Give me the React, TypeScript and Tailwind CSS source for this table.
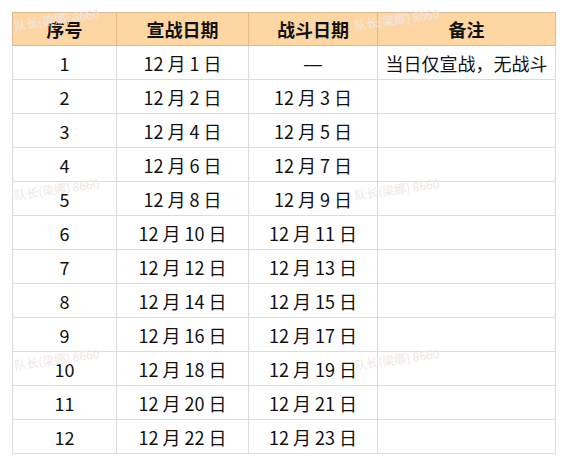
import React from 'react';

const rows = [
  { no: 1, declare: '12 月 1 日', battle: '—', note: '当日仅宣战，无战斗' },
  { no: 2, declare: '12 月 2 日', battle: '12 月 3 日', note: '' },
  { no: 3, declare: '12 月 4 日', battle: '12 月 5 日', note: '' },
  { no: 4, declare: '12 月 6 日', battle: '12 月 7 日', note: '' },
  { no: 5, declare: '12 月 8 日', battle: '12 月 9 日', note: '' },
  { no: 6, declare: '12 月 10 日', battle: '12 月 11 日', note: '' },
  { no: 7, declare: '12 月 12 日', battle: '12 月 13 日', note: '' },
  { no: 8, declare: '12 月 14 日', battle: '12 月 15 日', note: '' },
  { no: 9, declare: '12 月 16 日', battle: '12 月 17 日', note: '' },
  { no: 10, declare: '12 月 18 日', battle: '12 月 19 日', note: '' },
  { no: 11, declare: '12 月 20 日', battle: '12 月 21 日', note: '' },
  { no: 12, declare: '12 月 22 日', battle: '12 月 23 日', note: '' },
];

// faint watermark spots
const marks = [
  'left-[14px] top-[13px]',
  'left-[354px] top-[13px]',
  'left-[14px] top-[183px]',
  'left-[354px] top-[183px]',
  'left-[14px] top-[353px]',
  'left-[354px] top-[353px]',
];

export default function App() {
  return (
    <div className="relative w-[567px] h-[466px] bg-white p-3 font-['Noto_Sans_CJK_SC',sans-serif] text-[18px] text-[#111]">
      <table className="border-collapse table-fixed w-[543px]">
        <colgroup>
          <col className="w-[104px]" />
          <col className="w-[132px]" />
          <col className="w-[129px]" />
          <col className="w-[178px]" />
        </colgroup>
        <thead>
          <tr className="h-[33px] bg-[#fdd6a3]">
            {['序号', '宣战日期', '战斗日期', '备注'].map((h) => (
              <th key={h} className="border border-[#e3b88c] font-bold text-center p-0 leading-none">
                {h}
              </th>
            ))}
          </tr>
        </thead>
        <tbody>
          {rows.map((r) => (
            <tr key={r.no} className="h-[34px]">
              <td className="border border-[#dcdcdc] text-center p-0 leading-none">{r.no}</td>
              <td className="border border-[#dcdcdc] text-center p-0 leading-none">{r.declare}</td>
              <td className="border border-[#dcdcdc] text-center p-0 leading-none">
                {r.battle === '—' ? (
                  <span className="font-['Liberation_Sans',sans-serif] font-light">—</span>
                ) : (
                  r.battle
                )}
              </td>
              <td className="border border-[#dcdcdc] text-center p-0 leading-none">{r.note}</td>
            </tr>
          ))}
        </tbody>
      </table>

      {marks.map((m) => (
        <div
          key={m}
          className={`pointer-events-none absolute ${m} -rotate-[8deg] whitespace-nowrap text-[12px] leading-none text-[#efe8e6]`}
        >
          队长(梁娜) 8660
        </div>
      ))}
    </div>
  );
}
